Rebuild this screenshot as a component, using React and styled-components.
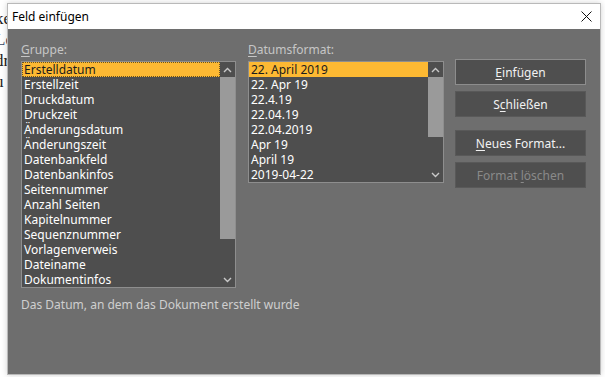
import React from "react";
import styled, { createGlobalStyle } from "styled-components";

const Global = createGlobalStyle`
  html, body { margin: 0; padding: 0; background: #ffffff; }
  body { font-family: "Noto Sans", "Open Sans", sans-serif; }
`;

const Desktop = styled.div`
  position: relative;
  width: 605px;
  height: 377px;
  overflow: hidden;
  background: #ffffff;
`;

const DocText = styled.div`
  position: absolute;
  left: -5px;
  top: 8px;
  font-family: "Liberation Serif", serif;
  font-size: 17px;
  line-height: 21px;
  color: #222;
`;

const DocLine = styled.div`
  color: ${(p) => p.$color || "#222"};
`;

const Window = styled.div`
  position: absolute;
  left: 7px;
  top: 3px;
  width: 592px;
  height: 370px;
  border: 1px solid #b9b9b9;
  background: #6e6e6e;
  display: flex;
  flex-direction: column;
  box-shadow: 0 0 6px rgba(0, 0, 0, 0.18);
`;

const TitleBar = styled.div`
  height: 25px;
  background: #ffffff;
  display: flex;
  align-items: center;
  justify-content: space-between;
  padding: 0 8px 0 4px;
  flex-shrink: 0;
`;

const Title = styled.span`
  font-size: 12px;
  color: #000;
`;

const Body = styled.div`
  flex: 1;
  display: flex;
  flex-direction: column;
  padding: 13px 0 0 13px;
`;

const Row = styled.div`
  display: flex;
  align-items: flex-start;
`;

const Column = styled.div`
  display: flex;
  flex-direction: column;
  margin-right: ${(p) => p.$gap || 0}px;
`;

const Label = styled.div`
  font-size: 12px;
  line-height: 15px;
  height: 15px;
  color: #c6c6c6;
  margin-bottom: 4px;
  u { text-decoration: underline; text-underline-offset: 2px; }
`;

const ListBox = styled.div`
  width: ${(p) => p.$w}px;
  height: ${(p) => p.$h}px;
  border: 1px solid #8e8e8e;
  background: #4e4e4e;
  display: flex;
  box-sizing: border-box;
`;

const Items = styled.div`
  flex: 1;
  display: flex;
  flex-direction: column;
  overflow: hidden;
`;

const Item = styled.div`
  height: 15px;
  line-height: 15px;
  font-size: 12px;
  padding-left: 2px;
  white-space: nowrap;
  box-sizing: border-box;
  color: ${(p) => (p.$sel ? "#1b1b1b" : "#ffffff")};
  background: ${(p) => (p.$sel ? "#fdb933" : "transparent")};
  outline: ${(p) => (p.$focus ? "1px dotted #6b5320" : "none")};
  outline-offset: -1px;
`;

const ScrollBar = styled.div`
  width: 15px;
  display: flex;
  flex-direction: column;
  background: #4e4e4e;
`;

const ArrowBox = styled.div`
  height: 15px;
  display: flex;
  align-items: center;
  justify-content: center;
  background: #4e4e4e;
`;

const Thumb = styled.div`
  height: ${(p) => p.$h}px;
  background: #9a9a9a;
`;

const Track = styled.div`
  flex: 1;
`;

const Buttons = styled.div`
  display: flex;
  flex-direction: column;
  margin-top: 17px;
`;

const Button = styled.div`
  width: 131px;
  height: 26px;
  box-sizing: border-box;
  background: #4f4f4f;
  border: 1px solid ${(p) => (p.$default ? "#8d8d8d" : "#595959")};
  display: flex;
  align-items: center;
  justify-content: center;
  font-size: 12px;
  color: ${(p) => (p.$disabled ? "#8a8a8a" : "#f2f2f2")};
  margin-top: ${(p) => p.$mt || 0}px;
  u { text-decoration: underline; text-underline-offset: 2px; }
`;

const Hint = styled.div`
  margin-top: 9px;
  font-size: 12px;
  line-height: 15px;
  color: #cfcfcf;
`;

const Chevron = ({ up }) => (
  <svg width="9" height="6" viewBox="0 0 9 6">
    <path
      d={up ? "M1 5 L4.5 1.5 L8 5" : "M1 1 L4.5 4.5 L8 1"}
      fill="none"
      stroke="#c9c9c9"
      strokeWidth="1.4"
    />
  </svg>
);

const CloseIcon = () => (
  <svg width="11" height="11" viewBox="0 0 11 11">
    <path d="M0.5 0.5 L10.5 10.5 M10.5 0.5 L0.5 10.5" stroke="#111" strokeWidth="1" />
  </svg>
);

const groups = [
  "Erstelldatum",
  "Erstellzeit",
  "Druckdatum",
  "Druckzeit",
  "Änderungsdatum",
  "Änderungszeit",
  "Datenbankfeld",
  "Datenbankinfos",
  "Seitennummer",
  "Anzahl Seiten",
  "Kapitelnummer",
  "Sequenznummer",
  "Vorlagenverweis",
  "Dateiname",
  "Dokumentinfos",
];

const formats = [
  "22. April 2019",
  "22. Apr 19",
  "22.4.19",
  "22.04.19",
  "22.04.2019",
  "Apr 19",
  "April 19",
  "2019-04-22",
];

const List = ({ items, w, h, thumb, focus }) => (
  <ListBox $w={w} $h={h}>
    <Items>
      {items.map((t, i) => (
        <Item key={t} $sel={i === 0} $focus={focus && i === 0}>
          {t}
        </Item>
      ))}
    </Items>
    <ScrollBar>
      <ArrowBox>
        <Chevron up />
      </ArrowBox>
      <Thumb $h={thumb} />
      <Track />
      <ArrowBox>
        <Chevron />
      </ArrowBox>
    </ScrollBar>
  </ListBox>
);

export default function App() {
  return (
    <>
      <Global />
      <Desktop>
        <DocText>
          <DocLine>ke</DocLine>
          <DocLine $color="#3b4a66">Lo</DocLine>
          <DocLine>dr</DocLine>
          <DocLine>u</DocLine>
        </DocText>
        <Window>
          <TitleBar>
            <Title>Feld einfügen</Title>
            <CloseIcon />
          </TitleBar>
          <Body>
            <Row>
              <Column $gap={12}>
                <Label>
                  <u>G</u>ruppe:
                </Label>
                <List items={groups} w={215} h={227} thumb={162} focus />
              </Column>
              <Column $gap={11}>
                <Label>
                  <u>D</u>atumsformat:
                </Label>
                <List items={formats} w={196} h={122} thumb={60} />
              </Column>
              <Buttons>
                <Button $default>
                  <span>
                    <u>E</u>infügen
                  </span>
                </Button>
                <Button $mt={6}>
                  <span>
                    S<u>c</u>hließen
                  </span>
                </Button>
                <Button $mt={13}>
                  <span>
                    <u>N</u>eues Format...
                  </span>
                </Button>
                <Button $mt={6} $disabled>
                  <span>
                    Format <u>l</u>öschen
                  </span>
                </Button>
              </Buttons>
            </Row>
            <Hint>Das Datum, an dem das Dokument erstellt wurde</Hint>
          </Body>
        </Window>
      </Desktop>
    </>
  );
}
